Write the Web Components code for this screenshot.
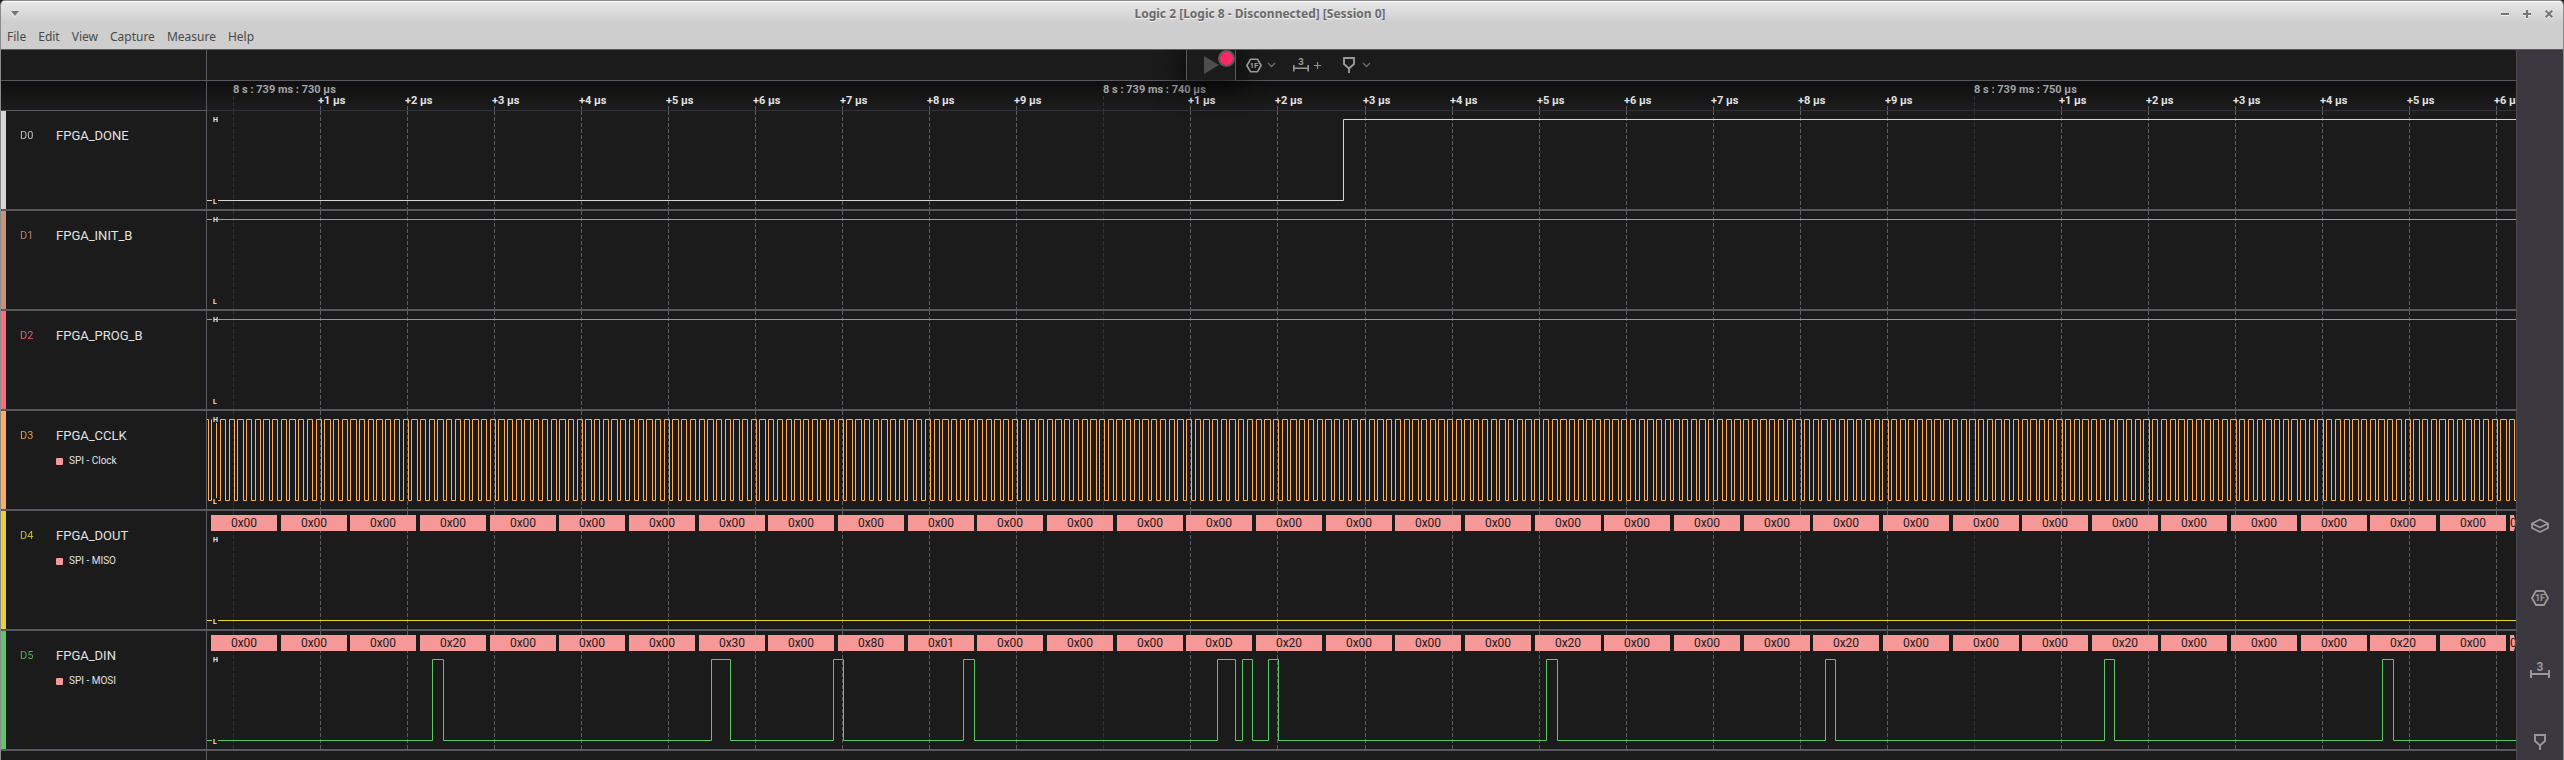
<!DOCTYPE html>
<html lang="en">
<head>
<meta charset="utf-8">
<title>Logic 2 [Logic 8 - Disconnected] [Session 0]</title>
<style>
  html, body { margin: 0; height: 100%; }
  body {
    --bg: #1b1b1b;
    --line: #58585e;
    --line-dim: #313137;
    --rail: #3a383e;
    --names: 206px;
    --rail-width: 47px;
    --icon: #9a9a9a;
    --bubble: #f69897;
    background: #1b1b1b;
    color: #e2e2e2;
    font-family: Roboto, "Liberation Sans", sans-serif;
    overflow: hidden;
  }
</style>
</head>
<body>
<logic-window>
  <title-bar slot="title">Logic 2 [Logic 8 - Disconnected] [Session 0]</title-bar>
  <menu-bar slot="menu" items="File,Edit,View,Capture,Measure,Help"></menu-bar>
  <capture-toolbar slot="main"></capture-toolbar>
  <time-ruler slot="main"></time-ruler>
  <logic-channel slot="main" code="D0" name="FPGA_DONE" color="#d6d6d6" wave="L 1343"></logic-channel>
  <logic-channel slot="main" code="D1" name="FPGA_INIT_B" color="#c8927a" wave="H"></logic-channel>
  <logic-channel slot="main" code="D2" name="FPGA_PROG_B" color="#ff6b7d" wave="H"></logic-channel>
  <logic-channel slot="main" code="D3" name="FPGA_CCLK" color="#ffae57" wave="clock" analyzer="SPI - Clock"></logic-channel>
  <logic-channel slot="main" code="D4" name="FPGA_DOUT" color="#e6d52e" wave="L" analyzer="SPI - MISO" bytes=""></logic-channel>
  <logic-channel slot="main" code="D5" name="FPGA_DIN" color="#5bc768" analyzer="SPI - MOSI"
    wave="L 432 443 711 730 833 843 963 974 1217 1235 1242 1252 1268 1278 1546 1557 1825 1835 2104 2114 2382 2393"
    bytes="3:20 7:30 9:80 10:01 14:0D 15:20 19:20 23:20 27:20 31:20"></logic-channel>
  <side-rail slot="rail"></side-rail>
</logic-window>

<script>
/* Time axis: screen position of 8 s 739 ms 730 µs, and pixels per µs. */
const ORIGIN = 233, PER_US = 87.04, AXIS_LEFT = 207;
const tickX = n => Math.round(ORIGIN + n * PER_US) - AXIS_LEFT;

function render(host, css, html) {
  const root = host.shadowRoot || host.attachShadow({ mode: "open" });
  root.innerHTML = `<style>${css}</style>${html}`;
  return root;
}

/* Calls draw(width) now and whenever the element's width changes. */
function drawToWidth(el, draw) {
  let last = -1;
  const run = () => {
    const w = Math.round(el.getBoundingClientRect().width);
    if (w !== last) { last = w; draw(w); }
  };
  run();
  new ResizeObserver(run).observe(el);
}

function gridLines(width, top, height, majorTop) {
  let out = "";
  for (let n = 0; tickX(n) < width; n++) {
    const major = n % 10 === 0, x = tickX(n) + .5, y = major ? majorTop : top;
    out += `<line x1="${x}" x2="${x}" y1="${y}" y2="${height}" stroke="${major ? "#313136" : "#5c5c61"}" stroke-dasharray="4 2"/>`;
  }
  return out;
}

const ICONS = {
  hex: `<svg class="i-hex" width="18" height="16" viewBox="0 0 18 16"><path d="M5 1H13L17 8L13 15H5L1 8Z" fill="none" stroke="currentColor" stroke-width="1.8" stroke-linejoin="round"/><text x="9" y="11.3" text-anchor="middle" font-size="9" font-weight="700" fill="currentColor">1F</text></svg>`,
  span: `<svg class="i-span" width="20" height="18" viewBox="0 0 20 18"><path d="M1 9V17M19 9V17M1 13H19" fill="none" stroke="currentColor" stroke-width="2"/><text x="10" y="9.500" text-anchor="middle" font-size="12" font-weight="700" fill="currentColor">3</text></svg>`,
  pin: `<svg class="i-pin" width="14" height="16" viewBox="0 0 14 16"><path d="M2 1H12V7L7 11.5L2 7ZM7 11V16" fill="none" stroke="currentColor" stroke-width="1.9"/></svg>`,
  layers: `<svg width="20" height="16" viewBox="0 0 20 16"><path d="M10 1.5L18 5.5L10 9.5L2 5.5ZM2 5.5V10L10 14L18 10V5.5" fill="none" stroke="currentColor" stroke-width="1.8" stroke-linejoin="round"/></svg>`,
  chevron: `<svg width="9" height="6" viewBox="0 0 9 6"><path d="M1 1L4.500 4.500L8 1" fill="none" stroke="#6c6c70" stroke-width="1.3"/></svg>`,
  plus: `<svg width="9" height="9" viewBox="0 0 9 9"><path d="M4.500 1V8M1 4.500H8" fill="none" stroke="#8e8e8e" stroke-width="1.2"/></svg>`
};
const BUTTON = `button { appearance: none; border: 0; margin: 0; padding: 0; background: none; color: inherit; font: inherit; display: flex; align-items: center; justify-content: center; } svg { display: block; flex: none; }`;

customElements.define("logic-window", class extends HTMLElement {
  connectedCallback() {
    render(this, `
      :host { display: flex; flex-direction: column; box-sizing: border-box; height: 100vh; border: solid #8b8b8b; border-width: 1px 1px 0; border-radius: 5px 5px 0 0; overflow: hidden; background: var(--bg); }
      header { height: 48px; box-shadow: inset 0 1px #fbfbfb; background: linear-gradient(#e8e8e8, #cecece 22px); border-bottom: 1px solid #5c5c60; flex: none; }
      .body { flex: 1; display: flex; min-height: 0; }
      main { flex: 1; min-width: 0; display: flex; flex-direction: column; }
      .rest { flex: 1; display: grid; grid-template-columns: var(--names) 1fr; }
      .rest i { border-right: 1px solid var(--line); }
    `, `<header><slot name="title"></slot><slot name="menu"></slot></header>
      <div class="body"><main><slot name="main"></slot><div class="rest"><i></i></div></main><slot name="rail"></slot></div>`);
  }
});

customElements.define("title-bar", class extends HTMLElement {
  connectedCallback() {
    render(this, `
      :host { display: flex; align-items: center; height: 25px; padding: 0 3px; color: #6a6a6a; font: 700 12px/24px "Noto Sans", sans-serif; }
      h1 { flex: 1; margin: 0; font: inherit; text-align: center; text-shadow: 0 1px #f2f2f2; }
      ${BUTTON}
      button { width: 22px; height: 24px; color: #757575; filter: drop-shadow(0 1px #f0f0f0); }
    `, `<button aria-label="Window menu"><svg width="10" height="6"><path d="M1 0H9L5 5Z" fill="currentColor"/></svg></button>
      <h1><slot></slot></h1>
      <button aria-label="Minimize"><svg width="8" height="8"><path d="M0 4H8" stroke="currentColor" stroke-width="2"/></svg></button>
      <button aria-label="Maximize"><svg width="8" height="8"><path d="M0 4H8M4 0V8" stroke="currentColor" stroke-width="2"/></svg></button>
      <button aria-label="Close"><svg width="8" height="8"><path d="M.7.7L7.300 7.300M7.300.7L.7 7.300" stroke="currentColor" stroke-width="2"/></svg></button>`);
  }
});

customElements.define("menu-bar", class extends HTMLElement {
  connectedCallback() {
    const items = this.getAttribute("items").split(",");
    render(this, `
      :host { display: block; }
      nav { display: flex; }
      ${BUTTON}
      button { height: 22px; padding: 0 6px; color: #4a4a4a; font: 12px/22px "Noto Sans", sans-serif; }
    `, `<nav>${items.map(t => `<button>${t}</button>`).join("")}</nav>`);
  }
});

customElements.define("capture-toolbar", class extends HTMLElement {
  connectedCallback() {
    render(this, `
      :host { display: grid; grid-template-columns: var(--names) 1fr; height: 30px; flex: none; border-bottom: 1px solid var(--line); color: var(--icon); position: relative; z-index: 1; }
      .names { border-right: 1px solid var(--line); }
      .tools { display: flex; justify-content: center; padding-right: calc(var(--names) - var(--rail-width)); }
      .group { display: flex; width: 193px; }
      ${BUTTON}
      .play { position: relative; width: 50px; box-sizing: border-box; border: solid var(--line); border-width: 0 1px; background: var(--bg); box-shadow: 0 2px 24px 6px #0009; clip-path: inset(0 -60px -40px -60px); color: #4d4d4d; }
      .dot { position: absolute; top: 0; right: 0; width: 13px; height: 13px; border: 2px solid #5b5b61; border-radius: 50%; background: #fb2a67; }
      .tool { position: relative; }
      .hex { width: 50px; gap: 5px; }
      .span { width: 44px; gap: 4px; }
      .pin { width: 49px; gap: 6px; justify-content: flex-end; padding-right: 8px; }
      .i-hex { width: 16px; height: 15px; }
      .i-span { width: 16px; height: 16px; }
    `, `<div class="names"></div><div class="tools"><div class="group">
      <button class="play" aria-label="Start capture"><svg width="16" height="18"><path d="M1 0L16 9L1 18Z" fill="currentColor"/></svg><span class="dot"></span></button>
      <button class="tool hex" aria-label="Analyzers">${ICONS.hex}${ICONS.chevron}</button>
      <button class="tool span" aria-label="Add measurement">${ICONS.span}${ICONS.plus}</button>
      <button class="tool pin" aria-label="Add marker">${ICONS.pin}${ICONS.chevron}</button>
    </div></div>`);
  }
});

customElements.define("time-ruler", class extends HTMLElement {
  connectedCallback() {
    const root = render(this, `
      :host { display: grid; grid-template-columns: var(--names) 1fr; height: 30px; flex: none; background: linear-gradient(#0f0f10, #1b1b1b 26px); }
      .names { border: solid var(--line); border-width: 0 1px 1px 0; }
      .scale { min-width: 0; overflow: hidden; border-bottom: 1px solid var(--line-dim); }
      svg { display: block; width: 100%; height: 29px; }
      text { font-size: 11px; font-weight: 700; fill: #e2e2e2; }
      .base { fill: #a3a3a5; }
    `, `<div class="names"></div><div class="scale"><svg></svg></div>`);
    drawToWidth(root.querySelector(".scale"), w => {
      let out = gridLines(w, 25, 29, 15);
      for (let n = 0; tickX(n) < w; n++) {
        out += n % 10 === 0
          ? `<text class="base" x="${tickX(n)}" y="12">8 s : 739 ms : ${730 + n} µs</text>`
          : `<text x="${tickX(n) - 2}" y="23">+${n % 10} µs</text>`;
      }
      root.querySelector("svg").innerHTML = out;
    });
  }
});

customElements.define("logic-channel", class extends HTMLElement {
  connectedCallback() {
    const a = k => this.getAttribute(k);
    const hasBytes = this.hasAttribute("bytes");
    const height = hasBytes ? 118 : 98;
    const root = render(this, `
      :host { display: grid; grid-template-columns: var(--names) 1fr; flex: none; height: ${height}px; border-bottom: 2px solid var(--line); }
      .names { display: grid; grid-template-columns: 36px 1fr; align-content: start; padding: 15px 0 0 14px; border-left: 5px solid var(--c); border-right: 1px solid var(--line); line-height: 20px; --c: ${a("color")}; }
      .code { color: var(--c); font-size: 11px; opacity: .85; }
      .name { font-size: 13px; }
      .analyzer { grid-column: 2; display: flex; align-items: center; gap: 6px; margin-top: 5px; font-size: 10px; }
      .analyzer i { width: 7px; height: 7px; border-radius: 1px; background: var(--bubble); }
      .wave { min-width: 0; overflow: hidden; }
      svg { display: block; width: 100%; height: ${height}px; }
      .level { font-size: 7px; font-weight: 700; fill: #e6e6e6; }
      .byte { font-size: 12px; fill: #241a1c; text-anchor: middle; }
      .cut { text-anchor: start; }
    `, `<div class="names"><span class="code">${a("code")}</span><span class="name">${a("name")}</span>
        ${a("analyzer") ? `<span class="analyzer"><i></i>${a("analyzer")}</span>` : ""}</div>
      <div class="wave"><svg></svg></div>`);
    const high = (hasBytes ? 28 : 8) + .5, low = high + 81;
    const svg = root.querySelector("svg");
    drawToWidth(root.querySelector(".wave"), w => {
      let out = gridLines(w, 0, height, 0);
      if (hasBytes) out += this.bytes(w);
      out += `<path d="${this.trace(w, high, low)}" fill="none" stroke="${a("color")}"/>`;
      for (const [t, y] of [["H", high], ["L", low + 1]])
        out += `<rect x="5" y="${y - 3.5}" width="6" height="7" fill="#1b1b1b"/><text class="level" x="6" y="${y + 2.5}">${t}</text>`;
      svg.innerHTML = out;
    });
  }
  /* Edges are listed in screen pixels, alternating from the first level. */
  trace(w, high, low) {
    let [level, ...edges] = this.getAttribute("wave").split(" ");
    if (level === "clock") {
      level = "H"; edges = [];
      for (let k = 0; edges.length < 2 || edges.at(-1) < w + AXIS_LEFT; k++)
        edges.push(Math.round(207.7 + 8.704 * k), Math.round(211.1 + 8.704 * k));
    }
    let y = level === "H" ? high : low, d = `M0 ${y}`;
    for (const e of edges) {
      const x = e - AXIS_LEFT + .5;
      y = y === high ? low : high;
      d += `H${x}V${y}`;
    }
    return d + (edges.at(-1) > w + AXIS_LEFT ? "" : `H${w}`);
  }
  bytes(w) {
    const values = Object.fromEntries(this.getAttribute("bytes").split(" ").filter(Boolean).map(p => p.split(":")));
    let out = "";
    for (let i = 0; ; i++) {
      const x = Math.round(4 + i * 69.66);
      if (x >= w) return out;
      if (x + 66 <= w) {
        out += `<rect x="${x}" y="4" width="66" height="16" fill="#f69897"/><text class="byte" x="${x + 33}" y="16">0x${values[i] || "00"}</text>`;
      } else {
        const e = w;
        out += `<clipPath id="cut"><path d="M${x} 4H${e - 2}L${e} 12L${e - 2} 20H${x}Z"/></clipPath><g clip-path="url(#cut)"><rect x="${x}" y="4" width="${w - x}" height="16" fill="#f69897"/><text class="byte cut" x="${x}" y="16">0</text></g>`;
      }
    }
  }
});

customElements.define("side-rail", class extends HTMLElement {
  connectedCallback() {
    render(this, `
      :host { display: flex; flex-direction: column; justify-content: flex-end; gap: 36px; flex: none; box-sizing: border-box; width: var(--rail-width); border-left: 1px solid #4c4b51; background: var(--rail); color: #99999b; }
      ${BUTTON}
      button { height: 36px; }
    `, `<button aria-label="Device">${ICONS.layers}</button><button aria-label="Analyzers">${ICONS.hex}</button>
      <button aria-label="Measurements">${ICONS.span}</button><button aria-label="Markers">${ICONS.pin}</button>`);
  }
});
</script>
</body>
</html>
